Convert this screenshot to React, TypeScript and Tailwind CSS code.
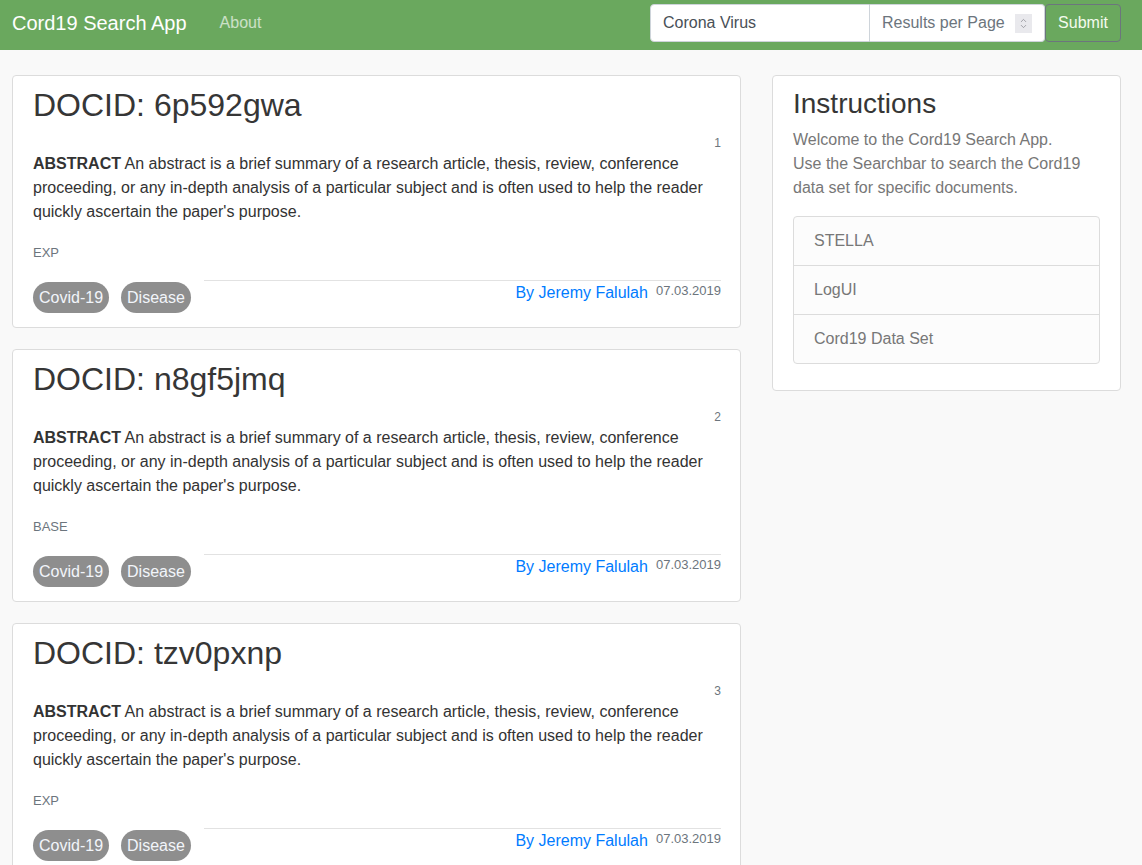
import { ChevronDown, ChevronUp } from 'lucide-react';

const docs = [
  { id: '6p592gwa', rank: 1, system: 'EXP' },
  { id: 'n8gf5jmq', rank: 2, system: 'BASE' },
  { id: 'tzv0pxnp', rank: 3, system: 'EXP' },
];

function DocCard({ doc }: { doc: (typeof docs)[number] }) {
  return (
    <div className="rounded-[4px] border border-[#dcdcdc] bg-white pl-5 pr-[19px] pt-[10.5px] pb-[14px]">
      <h2 className="text-[32px] leading-[37.5px] text-[#363636]">DOCID: {doc.id}</h2>
      <div className="mt-[10px] text-right text-[12px] leading-[18px] text-[#6c757d]">{doc.rank}</div>
      <p className="text-[16px] leading-6 text-[#333]">
        <b className="font-bold">ABSTRACT</b> An abstract is a brief summary of a research article, thesis, review,
        conference proceeding, or any in-depth analysis of a particular subject and is often used to help the reader
        quickly ascertain the paper's purpose.
      </p>
      <div className="mt-[19px] text-[13px] leading-5 text-[#6c757d]">{doc.system}</div>
      <div className="mt-[17px] flex items-start">
        <div className="mt-[2px] flex gap-3">
          <span className="rounded-full bg-[#8e8e8e] px-[6px] py-[3px] text-[16px] leading-[25px] text-[#f2f5fa]">Covid-19</span>
          <span className="rounded-full bg-[#8e8e8e] px-[6px] py-[3px] text-[16px] leading-[25px] text-[#f2f5fa]">Disease</span>
        </div>
        <div className="ml-[13px] flex-1 border-t border-[#e2e2e2]">
          <div className="flex items-start justify-end gap-2">
            <a className="text-[16px] leading-6 text-[#007bff]">By Jeremy Falulah</a>
            <span className="text-[13px] leading-5 text-[#6c757d]">07.03.2019</span>
          </div>
        </div>
      </div>
    </div>
  );
}

export default function App() {
  return (
    <div className="min-h-[865px] bg-[#f9f9f9] font-['Liberation_Sans',Arial,sans-serif]">
      <nav className="flex h-[50px] items-center bg-[#6aa85e] pb-1 pl-3 pr-[21px]">
        <span className="text-[20px] leading-[30px] text-white">Cord19 Search App</span>
        <a className="ml-[33px] text-[16px] text-white/65">About</a>
        <form className="ml-auto flex items-center">
          <div className="flex h-[38px] w-[220px] items-center rounded-l-[4px] border border-[#ced4da] bg-white px-3 text-[16px] text-[#495057]">
            Corona Virus
          </div>
          <div className="flex h-[38px] w-[175px] items-center rounded-r-[4px] border border-l-0 border-[#ced4da] bg-white pl-3 pr-[12px] text-[16px] text-[#6c757d]">
            <span className="flex-1">Results per Page</span>
            <span className="flex h-[19px] w-[17px] flex-col items-center justify-center bg-[#e9e9ed] text-[#8a8a90]">
              <ChevronUp className="-mb-[3px] h-[9px] w-[9px]" strokeWidth={2} />
              <ChevronDown className="h-[9px] w-[9px]" strokeWidth={2} />
            </span>
          </div>
          <button className="h-[38px] w-[76px] rounded-[4px] border border-[#6c757d] bg-[#6aa85e] text-[16px] text-[#f4fbee]">
            Submit
          </button>
        </form>
      </nav>

      <main className="grid grid-cols-[729px_349px] items-start gap-[31px] pt-[25px] pl-3">
        <div className="flex flex-col gap-[21px]">
          {docs.map((d) => (
            <DocCard key={d.id} doc={d} />
          ))}
        </div>

        <div className="rounded-[4px] border border-[#dcdcdc] bg-white px-5 pt-[10px] pb-[26px]">
          <h4 className="mt-[1px] text-[28px] leading-[1.2] text-[#363636]">Instructions</h4>
          <p className="mt-[7px] text-[16px] leading-6 text-[#777]">
            Welcome to the Cord19 Search App.
            <br />
            Use the Searchbar to search the Cord19 data set for specific documents.
          </p>
          <ul className="mt-4 rounded-[4px] border border-[#dcdcdc] bg-[#fcfcfc]">
            {['STELLA', 'LogUI', 'Cord19 Data Set'].map((item, i) => (
              <li
                key={item}
                className={`px-5 py-3 text-[16px] leading-6 text-[#777] ${i > 0 ? 'border-t border-[#dcdcdc]' : ''}`}
              >
                {item}
              </li>
            ))}
          </ul>
        </div>
      </main>
    </div>
  );
}
